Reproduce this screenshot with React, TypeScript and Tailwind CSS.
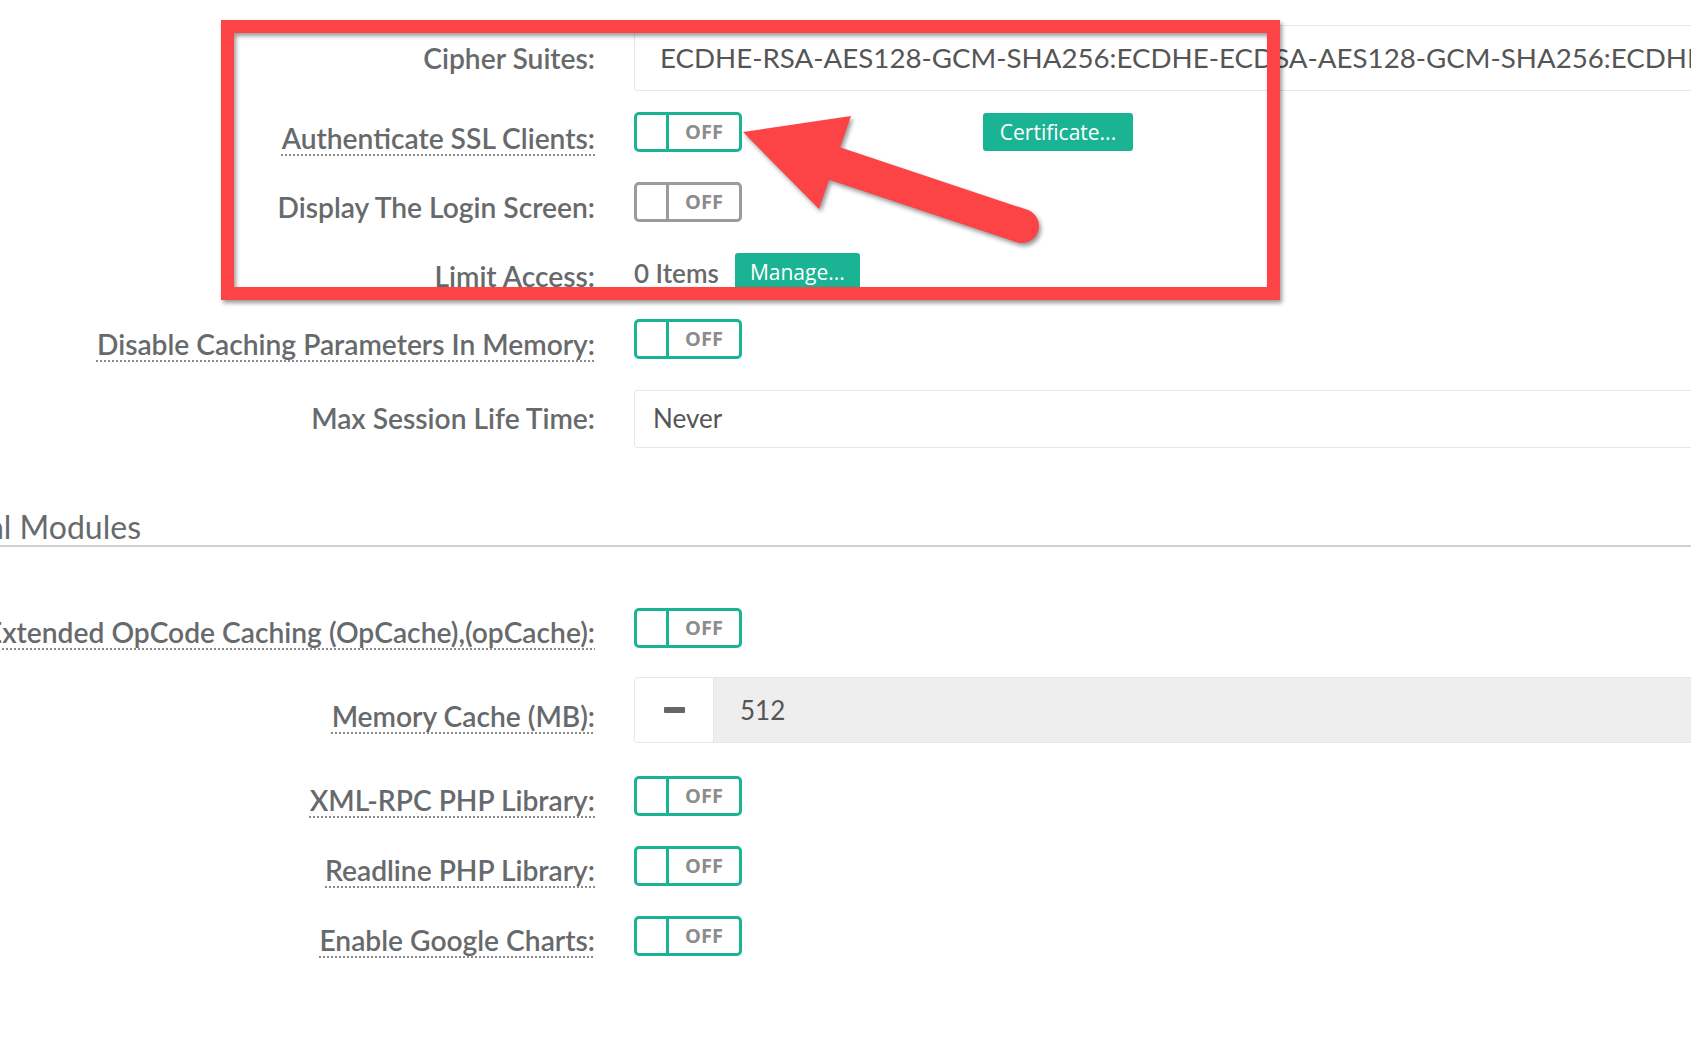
import { ReactNode } from "react";
import cn from "clsx";

type ToggleProps = {
  disabled?: boolean;
};

const Toggle = ({ disabled }: ToggleProps) => {
  return (
    <div
      className={cn(
        "flex h-[40px] w-[108px] shrink-0 rounded-[5px] border-[3px] bg-white",
        disabled ? "border-[#9b9b9b]" : "border-[#1ab394]"
      )}
    >
      <div
        className={cn(
          "w-[32px] border-r-[3px]",
          disabled ? "border-[#9b9b9b]" : "border-[#1ab394]"
        )}
      />
      <div className="flex flex-1 items-center justify-center font-['Open_Sans',sans-serif] text-[20px] leading-none font-bold text-[#8c8c8c]">
        OFF
      </div>
    </div>
  );
};

type RowProps = {
  label: string;
  hint?: boolean;
  className?: string;
  labelClassName?: string;
  children: ReactNode;
};

const Row = ({ label, hint, className, labelClassName, children }: RowProps) => {
  return (
    <div className={cn("flex items-start", className)}>
      <div className={cn("flex w-[595px] shrink-0 justify-end", labelClassName)}>
        <span
          className={cn(
            "whitespace-nowrap text-[28.2px] leading-none font-semibold text-[#676a6c]",
            hint &&
              "underline decoration-dotted decoration-[#8a8a8a] decoration-2 underline-offset-[5px]"
          )}
        >
          {label}
        </span>
      </div>
      <div className="ml-[39px] flex flex-1 items-center">{children}</div>
    </div>
  );
};

const GreenButton = ({ children, className }: { children: ReactNode; className?: string }) => {
  return (
    <button
      className={cn(
        "flex h-[38px] items-center justify-center rounded-[3px] bg-[#1ab394] font-['Open_Sans',sans-serif] text-[21px] leading-none text-white",
        className
      )}
    >
      {children}
    </button>
  );
};

export default function App() {
  return (
    <div className="relative h-[1050px] w-[1691px] overflow-hidden bg-white font-['Lato',sans-serif]">
      <div className="flex flex-col pt-[25px]">
        <Row label="Cipher Suites:" labelClassName="pt-[19px]">
          <div className="mr-[-80px] flex h-[66px] flex-1 items-center overflow-hidden whitespace-nowrap rounded-[3px] border border-[#e5e6e7] pl-[25px] text-[27.7px] leading-none text-[#555]">
            ECDHE-RSA-AES128-GCM-SHA256:ECDHE-ECDSA-AES128-GCM-SHA256:ECDHE-RSA-AES256-GCM-SHA384
          </div>
        </Row>

        <Row label="Authenticate SSL Clients:" hint className="mt-[21px]" labelClassName="pt-[12px]">
          <div className="flex h-[40px] items-center">
            <Toggle />
            <GreenButton className="ml-[241px] w-[150px]">Certificate...</GreenButton>
          </div>
        </Row>

        <Row label="Display The Login Screen:" className="mt-[30px]" labelClassName="pt-[11px]">
          <Toggle disabled />
        </Row>

        <Row label="Limit Access:" className="mt-[31px]" labelClassName="pt-[9px]">
          <div className="flex h-[38px] items-center">
            <span className="pt-[2px] text-[26px] leading-none font-semibold text-[#676a6c]">0 Items</span>
            <GreenButton className="ml-[16px] w-[125px]">Manage...</GreenButton>
          </div>
        </Row>

        <Row label="Disable Caching Parameters In Memory:" hint className="mt-[28px]" labelClassName="pt-[11px]">
          <Toggle />
        </Row>

        <Row label="Max Session Life Time:" className="mt-[31px]" labelClassName="pt-[14px]">
          <div className="mr-[-80px] flex h-[58px] flex-1 items-center rounded-[3px] border border-[#e5e6e7] pl-[18px] text-[26px] leading-none text-[#555]">
            <span className="mt-[-3px]">Never</span>
          </div>
        </Row>

        <div className="mt-[62px] border-b-2 border-[#d0d0d0] pb-[2px]">
          <div className="flex w-[141px] justify-end">
            <span className="whitespace-nowrap pt-[1px] text-[32px] leading-none text-[#676a6c]">
              Additional Modules
            </span>
          </div>
        </div>

        <Row
          label="Extended OpCode Caching (OpCache),(opCache):"
          hint
          className="mt-[61px]"
          labelClassName="pt-[10px]"
        >
          <Toggle />
        </Row>

        <Row label="Memory Cache (MB):" hint className="mt-[29px]" labelClassName="pt-[25px]">
          <div className="mr-[-80px] flex h-[66px] flex-1 overflow-hidden rounded-[4px] border border-[#e5e6e7]">
            <div className="flex w-[79px] items-center justify-center border-r border-[#e5e6e7] bg-white">
              <div className="h-[6px] w-[21px] rounded-[1px] bg-[#666]" />
            </div>
            <div className="flex flex-1 items-center bg-[#eeeeee] pl-[26px] text-[26px] leading-none text-[#555]">
              512
            </div>
          </div>
        </Row>

        <Row label="XML-RPC PHP Library:" hint className="mt-[33px]" labelClassName="pt-[10px]">
          <Toggle />
        </Row>

        <Row label="Readline PHP Library:" hint className="mt-[30px]" labelClassName="pt-[10px]">
          <Toggle />
        </Row>

        <Row label="Enable Google Charts:" hint className="mt-[30px]" labelClassName="pt-[10px]">
          <Toggle />
        </Row>
      </div>

      {/* annotation frame */}
      <div className="absolute top-[20px] left-[221px] h-[280px] w-[1059px] border-[13px] border-[#fc4346] drop-shadow-[2px_3px_2px_rgba(0,0,0,0.4)]" />

      {/* annotation arrow */}
      <svg
        className="absolute top-[100px] left-[730px] drop-shadow-[2px_3px_2px_rgba(0,0,0,0.4)]"
        width="330"
        height="160"
        viewBox="0 0 330 160"
      >
        <polygon points="13,32 121,16 89,109" fill="#fc4346" />
        <line
          x1="100"
          y1="62"
          x2="292"
          y2="126"
          stroke="#fc4346"
          strokeWidth="34"
          strokeLinecap="round"
        />
      </svg>
    </div>
  );
}
